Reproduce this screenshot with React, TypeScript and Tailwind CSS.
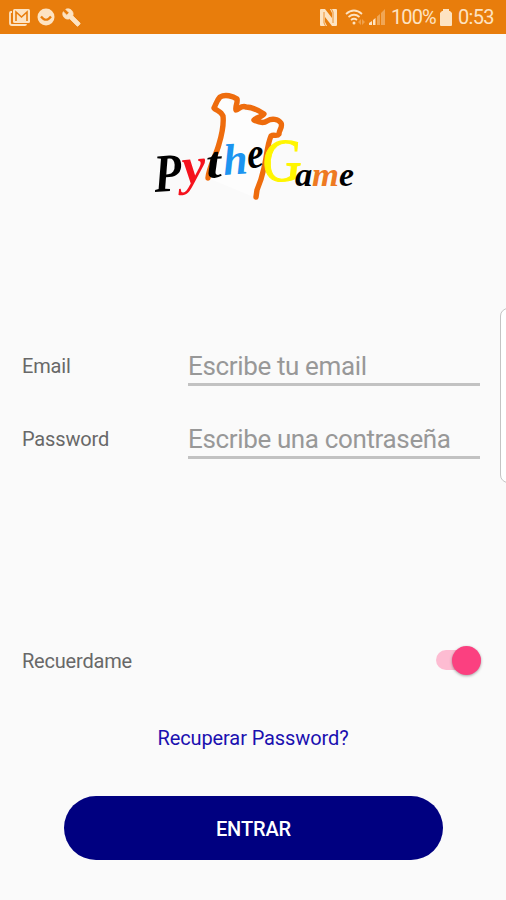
const logoLetters = [
  { char: "P", x: 10, y: 107, size: 54, scale: 0.84, rotate: -4, color: "#000000" },
  { char: "y", x: 38, y: 99, size: 52, scale: 1.02, rotate: -4, color: "#f5121d" },
  { char: "t", x: 62, y: 93, size: 45, scale: 1.2, rotate: -4, color: "#000000" },
  { char: "h", x: 79, y: 90, size: 44, scale: 1, rotate: -4, color: "#1c94f0" },
  { char: "e", x: 103, y: 83, size: 43, scale: 0.86, rotate: -4, color: "#000000" },
];

const gameLetters = [
  { char: "a", x: 150, size: 33, scale: 1.05, color: "#000000" },
  { char: "m", x: 167, size: 33, scale: 1.05, color: "#ee7a22" },
  { char: "e", x: 194, size: 33, scale: 1.02, color: "#000000" },
];

const fields = [
  { id: "email", label: "Email", type: "email", placeholder: "Escribe tu email" },
  { id: "password", label: "Password", type: "password", placeholder: "Escribe una contraseña" },
];

const StatusBar = () => {
  return (
    <header className="flex h-[34px] items-center justify-between bg-[#e87d0c] pl-[9px] pr-3 text-[#fde3c2]">
      <div className="flex items-center gap-[7px]">
        <svg width="21" height="18" viewBox="0 0 21 18">
          <path d="M3 4H2Q1 4 1 5v10q0 2 2 2h13q1 0 1-1" fill="none" stroke="currentColor" strokeWidth="1.8" />
          <rect x="4" y="1" width="17" height="14" rx="1.5" fill="currentColor" />
          <path d="M7 13V4l5.500 5L18 4v9" fill="none" stroke="#e87d0c" strokeWidth="1.6" />
        </svg>
        <svg width="18" height="18" viewBox="0 0 18 18">
          <circle cx="9" cy="9" r="8.500" fill="currentColor" />
          <path d="M4 8.500q5 6.500 10 0" fill="none" stroke="#e87d0c" strokeWidth="2.200" />
        </svg>
        <svg width="19" height="19" viewBox="0 0 24 24">
          <path
            d="M22.700 19l-9.100-9.100c.9-2.300.4-5-1.500-6.900-2-2-5-2.400-7.400-1.300L9 6 6 9 1.600 4.700C.4 7.100.9 10.100 2.900 12.100c1.900 1.900 4.600 2.400 6.900 1.500l9.100 9.100c.4.400 1 .4 1.400 0l2.300-2.300c.5-.4.500-1.100.1-1.400z"
            fill="currentColor"
            stroke="currentColor"
          />
        </svg>
      </div>
      <div className="flex items-center">
        <svg className="mr-px" width="17" height="17" viewBox="0 0 17 17">
          <path d="M0 1q0-1 1-1h4l7 9V4l-2-4h6q1 0 1 1v15q0 1-1 1h-4L5 8v5l2 4H1q-1 0-1-1z" fill="currentColor" />
          <path d="M4 3v11l1.500 3M13 14V3l-1.500-3" fill="none" stroke="#e87d0c" strokeWidth=".8" />
        </svg>
        <svg className="ml-[7px]" width="22" height="17" viewBox="0 0 22 17">
          <path d="M1 5q8-7 16 0M3.500 8q5.500-4.500 11 0M6 11q3-2.500 6 0" fill="none" stroke="currentColor" strokeWidth="1.700" />
          <circle cx="9" cy="14" r="1.500" fill="currentColor" />
          <path d="M13 13l3-3v6zM17 10l3 3-3 3z" fill="currentColor" opacity=".35" />
        </svg>
        <svg className="ml-[2px]" width="17" height="17" viewBox="0 0 17 17" fill="currentColor">
          <path d="M0 14l3-2v4H0zM4 11l2.500-2v7H4z" />
          <path d="M8 7.500l3-2.500v11H8zM12 4l4-4v16h-4z" opacity=".4" />
        </svg>
        <span className="ml-[5px] w-[46px] whitespace-nowrap text-[20px] leading-6 tracking-[-0.9px]">100%</span>
        <svg className="ml-[3px]" width="12" height="17" viewBox="0 0 12 17">
          <path d="M3 0h6v2h1l2 2v12q0 1-1 1H1q-1 0-1-1V4l2-2h1z" fill="currentColor" />
        </svg>
        <span className="ml-[6px] w-[36px] whitespace-nowrap text-[20px] leading-6 tracking-[-0.7px]">0:53</span>
      </div>
    </header>
  );
};

const Logo = () => {
  return (
    <svg className="ml-[145px] block" width="220" height="125" viewBox="0 0 220 125" fontFamily="'Liberation Serif', serif" fontWeight="700" fontStyle="italic">
      <path d="M63 93C64 81 71 71 74 59C77 49 80 40 78 32L69 23L80 10L91 25L119 29L136 38L135 49L126 51L111 113Z" fill="#fdfdfd" />
      <path
        d="M63 93C64 81 71 71 74 59C77 49 79 40 78 31C76 26 72 26 69 23C71 19 72 15 75 12C80 9 88 11 92 14C93 18 90 21 91 25C94 24 97 20 101 22C107 22 113 25 119 29C118 32 111 32 109 35C113 37 118 39 122 36C127 33 133 34 136 38C138 42 134 45 134 49C132 52 129 49 126 51C122 60 122 71 119 83C117 92 115 98 112 105L111 112"
        fill="none"
        stroke="#ee6c0d"
        strokeWidth="5.400"
        strokeLinecap="round"
        strokeLinejoin="round"
      />
      {logoLetters.map((l) => (
        <text key={l.char} transform={`translate(${l.x} ${l.y}) rotate(${l.rotate}) scale(${l.scale} 1)`} fontSize={l.size} fill={l.color}>
          {l.char}
        </text>
      ))}
      <text transform="translate(118 96) skewX(4) scale(0.9 1)" fontSize="61" fontWeight="400" fill="#fff500" stroke="#fff500" strokeWidth="1">
        G
      </text>
      {gameLetters.map((l) => (
        <text key={l.char} transform={`translate(${l.x} 101) scale(${l.scale} 1)`} fontSize={l.size} fill={l.color}>
          {l.char}
        </text>
      ))}
    </svg>
  );
};

const App = () => {
  return (
    <div className="relative flex h-[900px] w-[506px] flex-col overflow-hidden bg-[#fafafa] font-['Roboto',sans-serif] text-[#686868]">
      <StatusBar />
      <main className="flex flex-1 flex-col pt-[51px]">
        <Logo />
        <form className="mt-[134px] flex flex-col pl-[22px] pr-[26px]">
          {fields.map((field) => (
            <div key={field.id} className="flex h-[73px] items-start">
              <label htmlFor={field.id} className="w-[166px] pt-[10px] text-[20px] leading-6 tracking-[-0.15px]">
                {field.label}
              </label>
              <input
                id={field.id}
                type={field.type}
                placeholder={field.placeholder}
                className="h-[42px] min-w-0 flex-1 border-b-[3px] border-[#c2c2c2] bg-transparent pt-[5px] text-[26px] tracking-[-0.36px] outline-none placeholder:text-[#989898]"
              />
            </div>
          ))}
        </form>
        <div className="mt-[154px] flex h-[32px] items-center justify-between pl-[22px] pr-[25px]">
          <span className="pt-[2px] text-[20px] leading-6 tracking-[-0.2px]">Recuerdame</span>
          <button role="switch" aria-checked="true" aria-label="Recuerdame" className="flex h-5 w-[45px] items-center justify-end rounded-full bg-[#fdbcd2]">
            <span className="h-[29px] w-[29px] shrink-0 rounded-full bg-[#fb4080] shadow-[0_1px_3px_rgba(0,0,0,0.35)]" />
          </button>
        </div>
        <a className="mx-auto mt-[50px] text-[20px] leading-6 tracking-[-0.1px] text-[#1a10b0]">Recuperar Password?</a>
        <button className="ml-[64px] mt-[46px] h-16 w-[379px] rounded-full bg-[#000080] pt-px text-[20px] font-medium tracking-[-0.1px] text-white">ENTRAR</button>
      </main>
      {/* edge panel handle */}
      <div className="absolute right-[-12px] top-[308px] h-[175px] w-[18px] rounded-[8px] border border-[#c4c4c4] bg-white" />
    </div>
  );
};

export default App;
